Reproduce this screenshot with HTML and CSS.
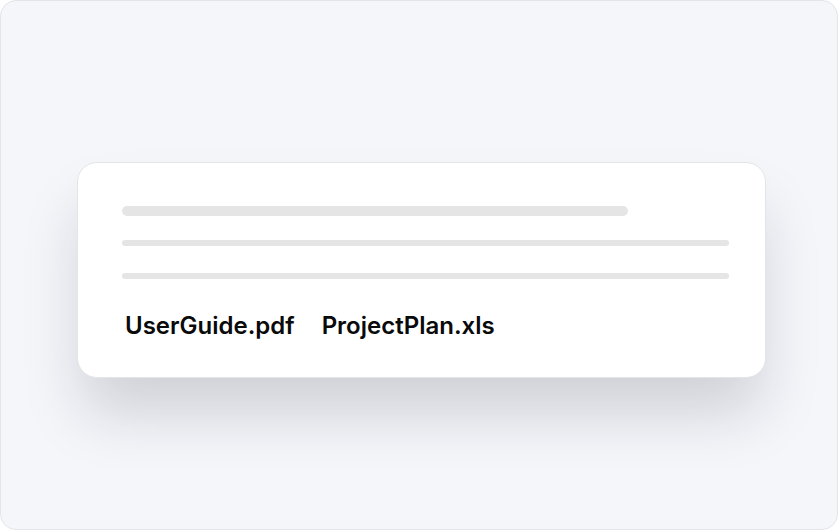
FILE: index.html
```html
<!DOCTYPE html>
<html>
<head>
<meta charset="utf-8">
<link rel="stylesheet" href="styles.css">
</head>
<body>
<div class="frame">
  <div class="card">
    <div class="bar bar-wide"></div>
    <div class="bar bar-thin"></div>
    <div class="bar bar-thin"></div>
    <div class="files">
      <span class="file">UserGuide.pdf</span>
      <span class="file">ProjectPlan.xls</span>
    </div>
  </div>
</div>
</body>
</html>
```
FILE: styles.css
```css
html, body {
  margin: 0;
  padding: 0;
}
body {
  width: 838px;
  height: 530px;
  font-family: Inter, "Noto Sans", sans-serif;
}
.frame {
  box-sizing: border-box;
  width: 838px;
  height: 530px;
  border: 1px solid #e3e5ea;
  border-radius: 16px;
  background: #f5f6fa;
  padding: 161px 72px 0 76px;
}
.card {
  box-sizing: border-box;
  width: 689px;
  height: 216px;
  background: #ffffff;
  border: 1px solid #e4e5e8;
  border-radius: 20px;
  padding: 43px 36px 0 44px;
  box-shadow: 0 40px 60px -6px rgba(20, 24, 40, 0.17);
  display: flex;
  flex-direction: column;
}
.bar {
  background: #e5e5e5;
  border-radius: 5px;
}
.bar-wide {
  width: 506px;
  height: 10px;
}
.bar-thin {
  height: 6px;
  margin-top: 24px;
  border-radius: 3px;
}
.bar-thin + .bar-thin {
  margin-top: 27px;
}
.files {
  display: flex;
  gap: 27px;
  margin-top: 33px;
  padding-left: 3px;
}
.file {
  font-size: 24px;
  font-weight: 600;
  color: #0a0a0a;
  line-height: 28px;
}
```
